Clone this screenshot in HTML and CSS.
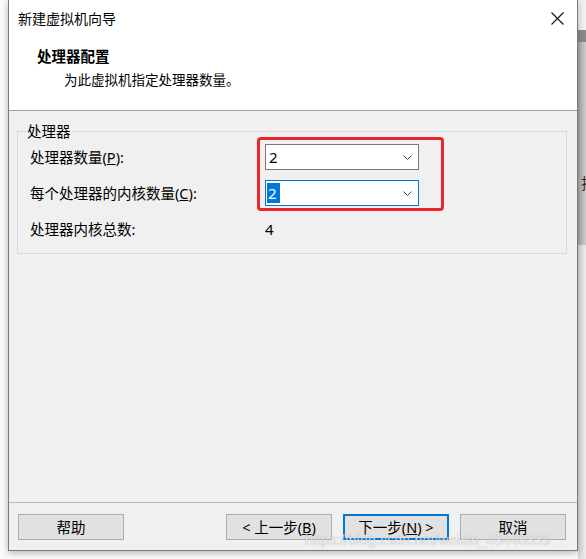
FILE: index.html
```html
<!DOCTYPE html>
<html lang="zh-CN">
<head>
<meta charset="utf-8">
<title>新建虚拟机向导</title>
<link rel="stylesheet" href="styles.css">
</head>
<body>
  <div class="dialog">
    <div class="titlebar">
      <span class="title">新建虚拟机向导</span>
      <svg class="close" width="13" height="13" viewBox="0 0 13 13"><path d="M0.5 0.5 L12.5 12.5 M12.5 0.5 L0.5 12.5" stroke="#111" stroke-width="1.1" fill="none"/></svg>
    </div>
    <div class="header">
      <div class="h-title">处理器配置</div>
      <div class="h-sub">为此虚拟机指定处理器数量。</div>
    </div>
    <div class="body">
      <fieldset class="group">
        <legend>处理器</legend>
        <div class="grid">
          <div class="label">处理器数量(<u>P</u>):</div>
          <div class="combo">
            <span class="val">2</span>
            <svg class="chev" width="9" height="5" viewBox="0 0 9 5"><path d="M0.5 0.5 L4.5 4.5 L8.5 0.5" stroke="#444" stroke-width="1" fill="none"/></svg>
            <div class="mark"></div>
          </div>
          <div class="label">每个处理器的内核数量(<u>C</u>):</div>
          <div class="combo focus">
            <span class="val sel">2</span>
            <svg class="chev" width="9" height="5" viewBox="0 0 9 5"><path d="M0.5 0.5 L4.5 4.5 L8.5 0.5" stroke="#444" stroke-width="1" fill="none"/></svg>
          </div>
          <div class="label">处理器内核总数:</div>
          <div class="total">4</div>
        </div>
      </fieldset>
      <div class="spacer"></div>
      <div class="footer">
        <button class="btn">帮助</button>
        <div class="right-btns">
          <button class="btn">&lt; 上一步(<u>B</u>)</button>
          <button class="btn default">下一步(<u>N</u>) &gt;</button>
          <button class="btn">取消</button>
        </div>
      </div>
    </div>
  </div>
  <div class="bgwin">
    <div class="bg-top"></div>
    <div class="bg-band"></div>
    <div class="bg-mid"><span class="bg-char">指</span></div>
    <div class="bg-low"></div>
  </div>
  <div class="watermark">https://blog.csdn.net/weixin_43446339</div>
</body>
</html>
```

FILE: styles.css
```css
html, body {
  margin: 0;
  padding: 0;
}
body {
  width: 586px;
  height: 559px;
  overflow: hidden;
  background: #fbfbfb;
  display: flex;
  padding-left: 8px;
  box-sizing: border-box;
  position: relative;
  font-family: "Noto Sans", "Noto Sans CJK SC", sans-serif;
  color: #000;
}
.dialog {
  width: 570px;
  height: 551px;
  box-sizing: border-box;
  border: 1px solid #7a7a7a;
  border-top: none;
  display: flex;
  flex-direction: column;
  background: #fff;
  box-shadow: 0 2px 7px rgba(0,0,0,0.28);
  position: relative;
  z-index: 1;
}
.titlebar {
  height: 38px;
  display: flex;
  align-items: center;
  justify-content: space-between;
  padding: 0 13px 0 9px;
  background: #fff;
}
.title {
  font-size: 14px;
  line-height: 20px;
}
.close {
  display: block;
  margin-top: -2px;
}
.header {
  height: 72px;
  border-bottom: 1px solid #a0a0a0;
  background: #fff;
  padding: 8px 0 0 28px;
  box-sizing: content-box;
  height: 64px;
}
.h-title {
  font-size: 14.5px;
  line-height: 20px;
  font-weight: 700;
}
.h-sub {
  font-size: 13.5px;
  line-height: 20px;
  margin-top: 4px;
  margin-left: 27px;
}
.body {
  flex: 1;
  background: #f0f0f0;
  display: flex;
  flex-direction: column;
  padding: 0 10px 0 8px;
}
.group {
  margin: 10px 0 0 0;
  border: 1px solid #d9d9d9;
  padding: 3px 12px 11px 12px;
  min-width: 0;
}
.group legend {
  font-size: 14.5px;
  line-height: 20px;
  padding: 0 1px;
  margin-left: -4px;
}
.grid {
  display: grid;
  grid-template-columns: 235px 154px;
  grid-auto-rows: 26px;
  row-gap: 10px;
  align-items: center;
}
.label {
  font-size: 14.5px;
  line-height: 20px;
  white-space: nowrap;
}
.combo {
  position: relative;
  height: 26px;
  box-sizing: border-box;
  border: 1px solid #7a7a7a;
  background: #fff;
  display: flex;
  align-items: center;
  justify-content: space-between;
  padding: 0 6px 0 1px;
}
.combo.focus {
  border-color: #0078d7;
}
.val {
  font-size: 15px;
  line-height: 20px;
  padding: 0 2px 0 2px;
}
.val.sel {
  background: #0078d7;
  color: #fff;
  padding: 0 3px 0 1px;
}
.chev {
  display: block;
}
.mark {
  position: absolute;
  left: -9px;
  top: -8px;
  width: 187px;
  height: 74px;
  box-sizing: border-box;
  border: 3px solid #e8262b;
  border-radius: 4px;
  pointer-events: none;
}
.total {
  font-size: 15px;
  line-height: 20px;
  padding-left: 0;
}
.spacer {
  flex: 1;
}
.footer {
  border-top: 1px solid #b9b9b9;
  margin: 0 -10px 0 -8px;
  padding: 11px 11px 10px 9px;
  display: flex;
  justify-content: space-between;
}
.right-btns {
  display: flex;
  gap: 11px;
}
.btn {
  width: 106px;
  height: 26px;
  box-sizing: border-box;
  border: 1px solid #adadad;
  background: #e1e1e1;
  font-family: "Noto Sans", "Noto Sans CJK SC", sans-serif;
  font-size: 14.5px;
  line-height: 20px;
  color: #000;
  padding: 0;
  margin: 0;
}
.btn.default {
  border: 2px solid #0078d7;
}
.bgwin {
  flex: 1;
  display: flex;
  flex-direction: column;
  overflow: hidden;
}
.bg-top {
  height: 30px;
  background: #f2f2f2;
}
.bg-band {
  height: 12px;
  background: #8a8a8a;
}
.bg-mid {
  height: 203px;
  background: linear-gradient(to right, #a8a8a8, #cfcfcf);
  position: relative;
}
.bg-char {
  position: absolute;
  left: 3px;
  top: 131px;
  font-size: 15px;
  line-height: 20px;
  color: #3a2a1a;
}
.bg-low {
  flex: 1;
  background: linear-gradient(to right, #d8d8d8, #ececec);
}
.watermark {
  position: absolute;
  left: 305px;
  top: 531px;
  font-family: "Liberation Sans", sans-serif;
  font-size: 14px;
  line-height: 18px;
  letter-spacing: 0.2px;
  color: rgba(255,255,255,0.75);
  text-shadow: 0 0 1px rgba(0,0,0,0.35);
  z-index: 2;
  white-space: nowrap;
}
```
